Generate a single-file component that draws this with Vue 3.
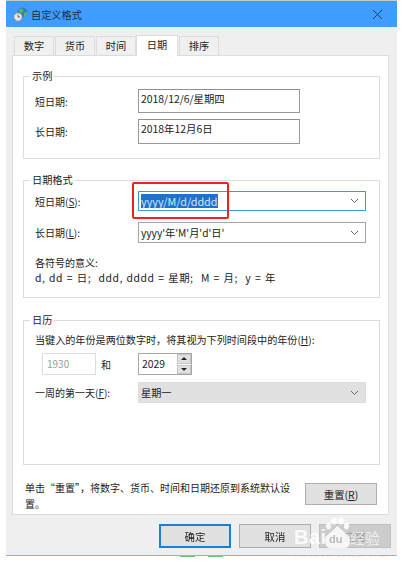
<script setup>
const tabs = ['数字', '货币', '时间', '日期', '排序']
</script>

<template>
  <div class="window">
    <div class="titlebar">
      <svg class="app-icon" width="15" height="15" viewBox="0 0 15 15">
        <circle cx="9.5" cy="5.5" r="5" fill="#2f7fc4" />
        <path d="M6 2.5 Q9 1 10.5 3 L9 6 L6.5 5 Z" fill="#5fb85a" />
        <path d="M11 6 L14 5 Q14 9 11 10 Z" fill="#5fb85a" />
        <circle cx="5" cy="10" r="4.2" fill="#e8e8e8" stroke="#7c8a96" stroke-width="1" />
        <path d="M5 7.5 V10 H7" fill="none" stroke="#555" stroke-width="0.9" />
      </svg>
      <span class="title">自定义格式</span>
      <svg class="close" width="11" height="11" viewBox="0 0 11 11">
        <path d="M1 1 L10 10 M10 1 L1 10" stroke="#2b3a4a" stroke-width="1" fill="none" />
      </svg>
    </div>

    <div class="body">
      <div class="tabs">
        <div v-for="t in tabs" :key="t" class="tab" :class="{ active: t === '日期' }">{{ t }}</div>
      </div>

      <div class="panel">
        <fieldset class="group sample">
          <legend>示例</legend>
          <div class="row first">
            <label>短日期:</label>
            <div class="readout">2018/12/6/星期四</div>
          </div>
          <div class="row second">
            <label>长日期:</label>
            <div class="readout tall">2018年12月6日</div>
          </div>
        </fieldset>

        <fieldset class="group format">
          <legend>日期格式</legend>
          <div class="row first-combo">
            <label>短日期(<u>S</u>):</label>
            <div class="combo focused">
              <span class="selected">yyyy/M/d/dddd</span>
              <svg class="chev" width="9" height="6" viewBox="0 0 9 6"><path d="M1 1 L4.5 4.5 L8 1" /></svg>
            </div>
            <div class="red-box"></div>
          </div>
          <div class="row second-combo">
            <label>长日期(<u>L</u>):</label>
            <div class="combo plain">
              <span>yyyy'年'M'月'd'日'</span>
              <svg class="chev" width="9" height="6" viewBox="0 0 9 6"><path d="M1 1 L4.5 4.5 L8 1" /></svg>
            </div>
          </div>
          <p class="legend-note">各符号的意义:<br /><span class="meaning">d, dd = 日;&nbsp; ddd, dddd = 星期;&nbsp; M = 月;&nbsp; y = 年</span></p>
        </fieldset>

        <fieldset class="group calendar">
          <legend>日历</legend>
          <p class="two-digit">当键入的年份是两位数字时，将其视为下列时间段中的年份(<u>H</u>):</p>
          <div class="years">
            <div class="year-from">1930</div>
            <span class="and">和</span>
            <div class="year-to">
              <span class="year-value">2029</span>
              <div class="spin">
                <div class="spin-btn"><i class="up"></i></div>
                <div class="spin-btn"><i class="down"></i></div>
              </div>
            </div>
          </div>
          <div class="row week">
            <label>一周的第一天(<u>F</u>):</label>
            <div class="combo gray">
              <span>星期一</span>
              <svg class="chev" width="9" height="6" viewBox="0 0 9 6"><path d="M1 1 L4.5 4.5 L8 1" /></svg>
            </div>
          </div>
        </fieldset>

        <div class="reset-row">
          <p>单击“重置”，将数字、货币、时间和日期还原到系统默认设置。</p>
          <button class="btn">重置(<u>R</u>)</button>
        </div>
      </div>

      <div class="actions">
        <button class="btn default">确定</button>
        <button class="btn">取消</button>
        <button class="btn disabled">应用</button>
      </div>
    </div>

    <div class="watermark">
      <svg class="paw" width="26" height="32" viewBox="0 0 26 32">
        <ellipse cx="3.5" cy="9" rx="2.6" ry="3.4" />
        <ellipse cx="9" cy="4" rx="2.8" ry="3.8" />
        <ellipse cx="16" cy="4" rx="2.8" ry="3.8" />
        <ellipse cx="21.5" cy="9" rx="2.6" ry="3.4" />
        <path d="M12.5 9 L24.5 20 Q26 31 20 31 H5 Q-1 31 0.5 20 Z" />
      </svg>
      <span class="wm-bai">Bai</span>
      <span class="wm-du">du</span>
      <span class="wm-jy">经验</span>
      <span class="wm-url">jingyan.baidu.com</span>
    </div>

    <div class="specks"><i></i><i></i></div>
  </div>
</template>

<style scoped>
.window {
  position: relative;
  width: 391px;
  margin-left: 6px;
  border-top: 1px solid #c8c8c8;
  font-family: "Noto Sans CJK SC", "Liberation Sans", sans-serif;
  font-size: 10px;
  color: #222;
  filter: blur(0.4px);
}
.titlebar {
  display: flex;
  align-items: center;
  height: 26px;
  padding: 0 14px 0 7px;
  background: #3f9dff;
  color: #1c2a3a;
}
.app-icon {
  margin-right: 3px;
}
.title {
  flex: 1;
  font-size: 10.2px;
}
.body {
  height: 529px;
  padding: 8px 0 0;
  box-sizing: border-box;
  background: #efefef;
  border-bottom: 1px solid #7db8ee;
}
.tabs {
  display: flex;
  align-items: flex-end;
  height: 20px;
  margin-left: 8px;
}
.tab {
  width: 40px;
  height: 19px;
  margin-right: 1px;
  box-sizing: border-box;
  background: #f0f0f0;
  border: 1px solid #dcdcdc;
  border-bottom: none;
  font-size: 10.2px;
  line-height: 18px;
  text-align: center;
}
.tab.active {
  width: 42px;
  height: 21px;
  margin: 0 1px 0 -1px;
  background: #fff;
  line-height: 17px;
  position: relative;
  z-index: 1;
  margin-bottom: -1px;
}
.panel {
  width: 377px;
  height: 460px;
  margin-left: 6px;
  padding: 0 9px 0 10px;
  box-sizing: border-box;
  background: #fff;
  border: 1px solid #dcdcdc;
  overflow: hidden;
}
.group {
  display: block;
  width: 357px;
  margin: 0;
  padding: 0;
  box-sizing: border-box;
  border: 1px solid #dcdcdc;
}
.group legend {
  margin-left: 6px;
  padding: 0 2px;
  height: 16px;
  line-height: 16px;
  font-size: 10.2px;
}
.sample {
  height: 91px;
  margin-top: 12px;
}
.format {
  height: 126px;
  margin-top: 13px;
}
.calendar {
  height: 153px;
  margin-top: 14px;
}
.row {
  position: relative;
  display: flex;
  align-items: center;
  padding-left: 11px;
}
.row label {
  width: 103px;
  flex: none;
}
.row u,
.two-digit u,
.btn u {
  text-underline-offset: 1px;
}
.first {
  margin-top: 5px;
}
.second {
  margin-top: 6px;
}
.readout {
  width: 162px;
  height: 24px;
  padding: 1px 3px 1px 2px;
  box-sizing: border-box;
  border: 1px solid #9a9a9a;
  border-top-color: #8f8f8f;
  line-height: 15px;
  font-size: 10.4px;
}
.readout.tall {
  height: 25px;
}
.combo {
  display: flex;
  align-items: center;
  justify-content: space-between;
  width: 228px;
  padding: 0 6px 0 2px;
  box-sizing: border-box;
  border: 1px solid #a5a5a5;
  font-size: 10.2px;
}
.chev {
  fill: none;
  stroke: #666;
  stroke-width: 1;
}
.first-combo {
  margin-top: 3px;
}
.second-combo {
  margin-top: 11px;
}
.focused {
  height: 20px;
  border-color: #3f97dc;
}
.selected {
  background: #1a73d1;
  color: #d6e6f6;
  font-size: 10.8px;
  line-height: 14px;
}
.plain {
  height: 21px;
}
.gray {
  height: 21px;
  background: #e1e1e1;
  border-color: #dcdcdc;
}
.red-box {
  position: absolute;
  left: 108px;
  top: -9px;
  width: 97px;
  height: 37px;
  box-sizing: border-box;
  border: 2.5px solid #f5201c;
  border-radius: 2px;
}
.legend-note {
  margin: 12px 0 0 11px;
  line-height: 15px;
}
.meaning {
  font-size: 10.4px;
  letter-spacing: 0.55px;
  word-spacing: 0.8px;
}
.two-digit {
  margin: 4px 0 0 11px;
  line-height: 15px;
  font-size: 10.1px;
}
.years {
  display: flex;
  align-items: center;
  margin: 6px 0 0 18px;
}
.year-from {
  width: 54px;
  height: 22px;
  padding-left: 4px;
  box-sizing: border-box;
  border: 1px solid #dcdcdc;
  color: #9a9a9a;
  line-height: 19px;
}
.and {
  width: 42px;
  padding-left: 5px;
  box-sizing: border-box;
}
.year-to {
  display: flex;
  justify-content: space-between;
  width: 54px;
  height: 22px;
  box-sizing: border-box;
  border: 1px solid #a8a8a8;
  padding-left: 3px;
  line-height: 19px;
  font-size: 10.4px;
}
.spin {
  display: flex;
  flex-direction: column;
  gap: 1px;
  width: 14px;
  padding: 0 0 0 1px;
  background: #fff;
}
.spin-btn {
  flex: 1;
  display: flex;
  align-items: center;
  justify-content: center;
  background: #e1e1e1;
  border: 1px solid #c4c4c4;
}
.up {
  border: 3px solid transparent;
  border-top: 0;
  border-bottom: 3px solid #222;
}
.down {
  border: 3px solid transparent;
  border-bottom: 0;
  border-top: 3px solid #222;
}
.week {
  margin-top: 7px;
}
.reset-row {
  display: flex;
  justify-content: space-between;
  align-items: flex-start;
  margin-top: 15px;
  padding-left: 2px;
  padding-right: 2px;
}
.reset-row p {
  width: 266px;
  margin: 0;
  line-height: 16px;
}
.btn {
  width: 72px;
  height: 22px;
  padding: 0;
  box-sizing: border-box;
  background: #e1e1e1;
  border: 1px solid #adadad;
  font-family: inherit;
  font-size: 10.4px;
  color: #222;
}
.reset-row .btn {
  margin-top: 3px;
}
.actions {
  display: flex;
  justify-content: flex-end;
  gap: 8px;
  margin-top: 9px;
  padding-right: 6px;
}
.actions .btn {
  height: 24px;
}
.default {
  border: 2px solid #1a7fd6;
}
.disabled {
  background: #ccc;
  border-color: #bfbfbf;
  color: #999;
}
.watermark {
  position: absolute;
  left: 286px;
  top: 515px;
  width: 100px;
  height: 50px;
  color: #fff;
  opacity: 0.85;
}
.paw {
  position: absolute;
  left: 33px;
  top: 1px;
  fill: #fff;
}
.wm-bai {
  position: absolute;
  left: 2px;
  top: 10px;
  font-family: "Liberation Sans", sans-serif;
  font-size: 20px;
  font-weight: 700;
  letter-spacing: 0.5px;
}
.wm-du {
  position: absolute;
  left: 37px;
  top: 17px;
  font-family: "Liberation Sans", sans-serif;
  font-size: 11px;
  font-weight: 700;
  color: #b5b5b5;
}
.wm-jy {
  position: absolute;
  left: 58px;
  top: 12px;
  font-size: 15px;
  line-height: 20px;
  color: #f4f4f4;
}
.wm-url {
  position: absolute;
  left: 2px;
  top: 35px;
  font-family: "Liberation Serif", serif;
  font-size: 11px;
  letter-spacing: 0.75px;
  color: #e4e4e4;
  white-space: nowrap;
}
.specks {
  display: flex;
  margin-left: 174px;
  gap: 13px;
}
.specks i {
  display: block;
  width: 15px;
  height: 1px;
  background: #6fc27a;
}
</style>

<style>
html, body {
  background: #fff;
  overflow: hidden;
}
</style>
